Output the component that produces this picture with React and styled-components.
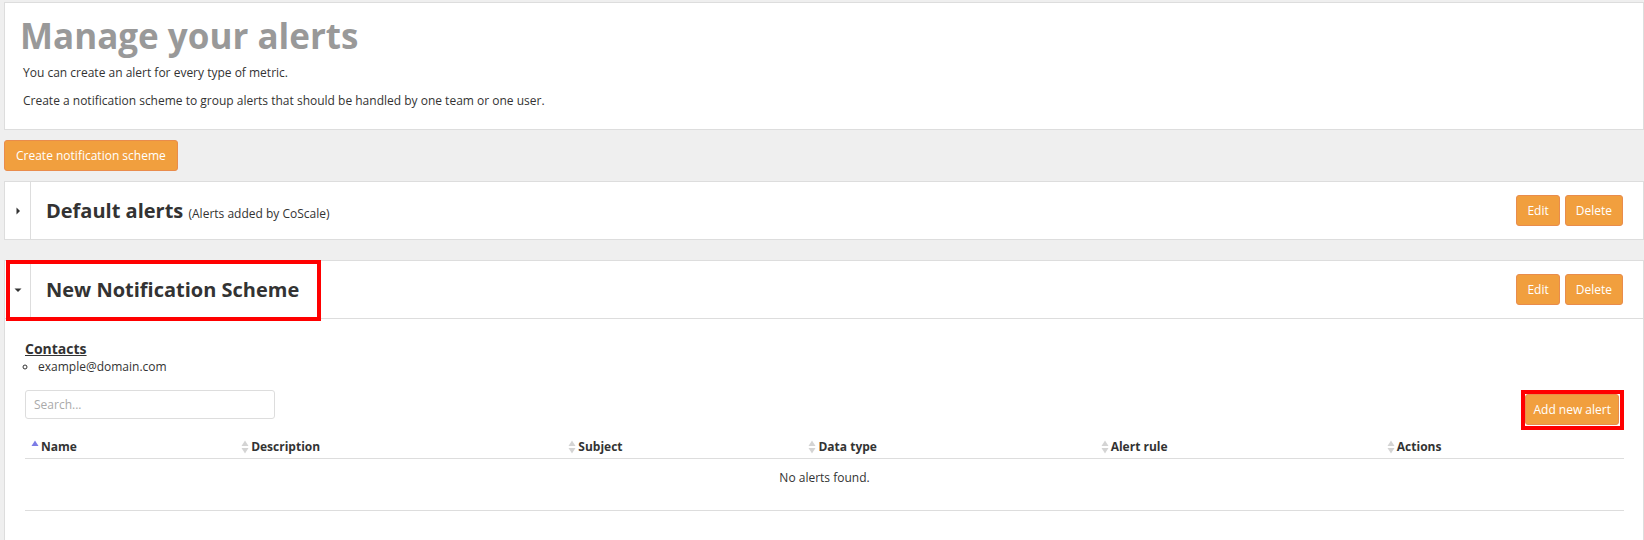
import React from "react";
import styled, { createGlobalStyle } from "styled-components";

const GlobalStyle = createGlobalStyle`
  body {
    margin: 0;
    background: #efefef;
    font-family: "Open Sans", "Liberation Sans", sans-serif;
    font-size: 12px;
    color: #333;
  }
`;

const Page = styled.div`
  padding: 2px 0 40px 4px;
`;

const Panel = styled.div`
  background: #fff;
  border: 1px solid #ddd;
  margin-top: ${(p) => p.$gap || 0}px;
`;

const Intro = styled(Panel)`
  padding: 13px 15px 19px;

  h1 {
    margin: 0;
    font-size: 35px;
    line-height: 40px;
    font-weight: 700;
    color: #999;
  }

  p {
    margin: 8px 0 0 3px;
    line-height: 18px;
  }

  p + p {
    margin-top: 10px;
  }
`;

const Button = styled.button`
  display: inline-flex;
  align-items: center;
  height: 31px;
  padding: 0 ${(p) => p.$pad || 11}px;
  background: #f19f3e;
  border: 1px solid #e98c4c;
  border-radius: 3px;
  color: #fff;
  font-family: inherit;
  font-size: 12px;
  cursor: pointer;
`;

const CreateRow = styled.div`
  margin-top: 10px;
  display: flex;
`;

const Header = styled.div`
  position: relative;
  display: flex;
  align-items: center;
  height: 57px;
  border-bottom: ${(p) => (p.$open ? "1px solid #ddd" : "none")};
`;

const Toggle = styled.div`
  width: 25px;
  align-self: stretch;
  display: flex;
  align-items: center;
  justify-content: center;
  border-right: 1px solid #ddd;
`;

const Title = styled.h2`
  flex: 1;
  margin: 0 0 0 15px;
  font-size: 20px;
  font-weight: 700;
  color: #333;

  small {
    font-size: 12px;
    font-weight: 400;
  }
`;

const Actions = styled.div`
  display: flex;
  gap: 5px;
  padding-right: 20px;
`;

const Highlight = styled.div`
  position: absolute;
  left: 1px;
  top: -1px;
  width: 315px;
  height: 61px;
  border: 4px solid #f00;
  box-sizing: border-box;
  pointer-events: none;
`;

const Body = styled.div`
  padding: 21px 19px 60px 20px;
`;

const Contacts = styled.h4`
  margin: 0;
  font-size: 14px;
  line-height: 18px;
  font-weight: 700;
  text-decoration: underline;
`;

const ContactList = styled.ul`
  margin: 0;
  padding-left: 13px;
  list-style: circle;
  line-height: 18px;
`;

const Toolbar = styled.div`
  display: flex;
  justify-content: space-between;
  align-items: flex-start;
  margin-top: 14px;
`;

const Search = styled.input`
  width: 250px;
  height: 29px;
  box-sizing: border-box;
  padding: 0 8px;
  border: 1px solid #ddd;
  border-radius: 3px;
  font-family: inherit;
  font-size: 12px;
  color: #333;

  &::placeholder {
    color: #aaa;
  }
`;

const ButtonFrame = styled.div`
  display: inline-flex;
  border: 4px solid #f00;
  padding: 0 1px 1px 0;
  background: #fff;
`;

const Table = styled.div`
  margin-top: 8px;
`;

const Row = styled.div`
  display: grid;
  grid-template-columns: 210fr 327fr 240fr 292fr 286fr 243fr;
  height: 20px;
  border-bottom: 1px solid #ddd;
`;

const Th = styled.div`
  display: flex;
  align-items: center;
  gap: 2px;
  padding-left: 6px;
  font-weight: 700;
  line-height: 18px;
  padding-bottom: 2px;
`;

const Empty = styled.div`
  padding: 10px 0 23px;
  line-height: 18px;
  text-align: center;
  border-bottom: 1px solid #ddd;
`;

const Caret = ({ down }) => (
  <svg width="8" height="8" viewBox="0 0 8 8">
    {down ? <path d="M0.5 2.5h7L4 6z" fill="#333" /> : <path d="M2.5 0.5v7L6 4z" fill="#333" />}
  </svg>
);

const SortIcon = ({ active }) => (
  <svg width="8" height="16" viewBox="0 0 8 16">
    <path d="M4 1.5L7.5 7H0.5z" fill={active ? "#7c7ce6" : "#d4d4d4"} />
    {!active && <path d="M4 14.5L7.5 9H0.5z" fill="#d4d4d4" />}
  </svg>
);

const columns = ["Name", "Description", "Subject", "Data type", "Alert rule", "Actions"];

const SchemeHeader = ({ open, title, note, highlight }) => (
  <Header $open={open}>
    <Toggle>
      <Caret down={open} />
    </Toggle>
    <Title>
      {title} {note && <small>{note}</small>}
    </Title>
    <Actions>
      <Button $pad={10}>Edit</Button>
      <Button $pad={10}>Delete</Button>
    </Actions>
    {highlight && <Highlight />}
  </Header>
);

export default function App() {
  return (
    <Page>
      <GlobalStyle />
      <Intro>
        <h1>Manage your alerts</h1>
        <p>You can create an alert for every type of metric.</p>
        <p>Create a notification scheme to group alerts that should be handled by one team or one user.</p>
      </Intro>

      <CreateRow>
        <Button>Create notification scheme</Button>
      </CreateRow>

      <Panel $gap={10}>
        <SchemeHeader title="Default alerts" note="(Alerts added by CoScale)" />
      </Panel>

      <Panel $gap={20}>
        <SchemeHeader open highlight title="New Notification Scheme" />
        <Body>
          <Contacts>Contacts</Contacts>
          <ContactList>
            <li>example@domain.com</li>
          </ContactList>

          <Toolbar>
            <Search placeholder="Search..." />
            <ButtonFrame>
              <Button $pad={7}>Add new alert</Button>
            </ButtonFrame>
          </Toolbar>

          <Table>
            <Row>
              {columns.map((c, i) => (
                <Th key={c}>
                  <SortIcon active={i === 0} />
                  {c}
                </Th>
              ))}
            </Row>
            <Empty>No alerts found.</Empty>
          </Table>
        </Body>
      </Panel>
    </Page>
  );
}
